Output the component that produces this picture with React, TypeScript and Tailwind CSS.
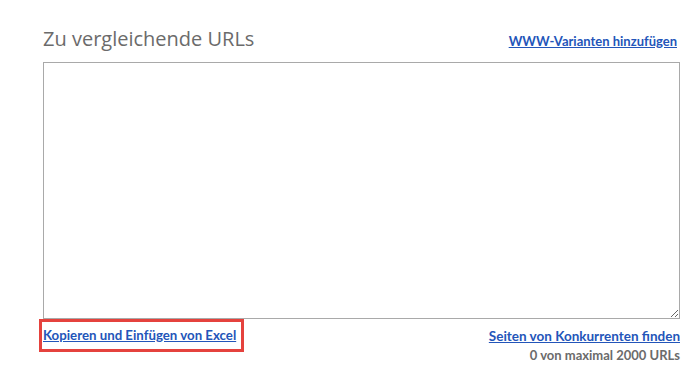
export default function App() {
  return (
    <div className="w-[700px] h-[372px] bg-white font-['Open_Sans',sans-serif]">
      <div className="ml-[43px] w-[637px] pt-[20px]">
        <div className="flex items-end justify-between h-[42px]">
          <h2 className="mb-[8px] text-[20px] leading-[30px] text-[#6b6b6b] font-normal">Zu vergleichende URLs</h2>
          <a href="#" className="mb-[11px] mr-[3px] font-['Lato',sans-serif] text-[13px] font-bold text-[#2355b9] underline">
            WWW-Varianten hinzufügen
          </a>
        </div>
        <textarea className="block w-full h-[257px] border border-[#a9a9a9] resize-y outline-none" />
        <div className="flex justify-between items-start">
          <div className="-ml-[4px] border-[3px] border-[#e5423d] pl-[1px] pr-[5px] h-[33px] flex items-center">
            <a href="#" className="font-['Lato',sans-serif] text-[13.25px] font-bold text-[#2355b9] underline">
              Kopieren und Einfügen von Excel
            </a>
          </div>
          <div className="flex flex-col items-end pt-[8px] font-['Lato',sans-serif] font-bold leading-[19px]">
            <a href="#" className="text-[13.5px] text-[#2355b9] underline">Seiten von Konkurrenten finden</a>
            <span className="text-[13px] text-[#6b6b6b]">0 von maximal 2000 URLs</span>
          </div>
        </div>
      </div>
    </div>
  );
}
